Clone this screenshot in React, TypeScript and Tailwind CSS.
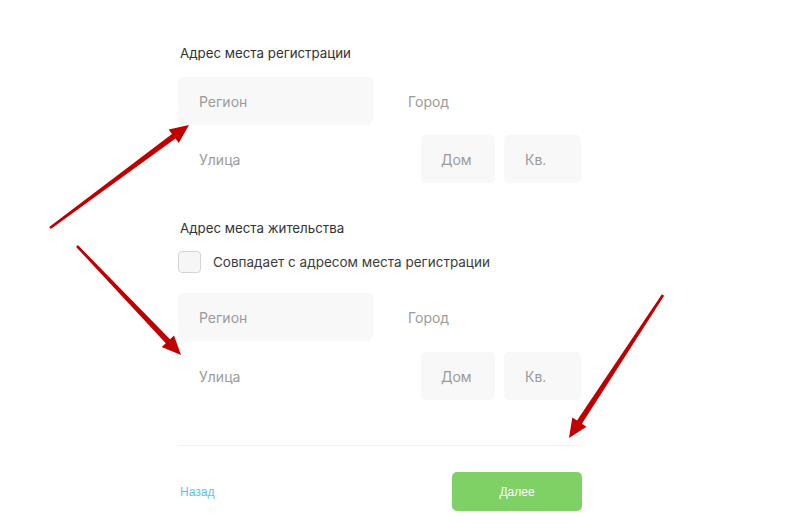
import React from "react";

type Pt = [number, number];

// tapered annotation arrow: thin tail, wide shaft near the head
function Arrow({ from, to }: { from: Pt; to: Pt }) {
  const [x1, y1] = from;
  const [x2, y2] = to;
  const dx = x2 - x1;
  const dy = y2 - y1;
  const len = Math.hypot(dx, dy);
  const ux = dx / len;
  const uy = dy / len;
  const nx = -uy;
  const ny = ux;
  const headLen = 19;
  const headW = 8.5;
  const bx = x2 - ux * headLen;
  const by = y2 - uy * headLen;
  const t0 = 1.3;
  const t1 = 2.9;
  const pts: Pt[] = [
    [x1 + nx * t0, y1 + ny * t0],
    [bx + nx * t1, by + ny * t1],
    [bx + nx * headW, by + ny * headW],
    [x2, y2],
    [bx - nx * headW, by - ny * headW],
    [bx - nx * t1, by - ny * t1],
    [x1 - nx * t0, y1 - ny * t0],
  ];
  return (
    <polygon
      points={pts.map((p) => `${p[0].toFixed(1)},${p[1].toFixed(1)}`).join(" ")}
      fill="#c00000"
    />
  );
}

function Field({ label, filled, className }: { label: string; filled?: boolean; className?: string }) {
  return (
    <div
      className={`h-[48px] rounded-[5px] flex items-center pl-[21px] text-[14px] text-[#9b9b9b] ${
        filled ? "bg-[#f8f8f8]" : "bg-white"
      } ${className ?? ""}`}
    >
      {label}
    </div>
  );
}

function AddressBlock({ rowGap }: { rowGap: string }) {
  return (
    <div className={`flex flex-col ${rowGap}`}>
      <div className="flex gap-[15px]">
        <Field label="Регион" filled className="w-[195px]" />
        <Field label="Город" className="w-[193px] !pl-[20px]" />
      </div>
      <div className="flex">
        <Field label="Улица" className="w-[243px]" />
        <Field label="Дом" filled className="w-[74px] !pl-[20px]" />
        <div className="w-[9px]" />
        <Field label="Кв." filled className="w-[77px]" />
      </div>
    </div>
  );
}

export default function App() {
  return (
    <div className="relative w-[800px] h-[531px] bg-white overflow-hidden" style={{ fontFamily: "Inter, 'Noto Sans', sans-serif" }}>
      <div className="ml-[178px] w-[403px] pt-[44px]">
        <div className="h-[18px] pl-[2px] text-[13.3px] leading-[18px] text-[#333]">Адрес места регистрации</div>
        <div className="mt-[15px]">
          <AddressBlock rowGap="gap-[10px]" />
        </div>

        <div className="mt-[36px] h-[18px] pl-[2px] text-[13.3px] leading-[18px] text-[#333]">Адрес места жительства</div>
        <label className="mt-[14px] flex items-center gap-[12px] h-[22px]">
          <span className="w-[23px] h-[22px] rounded-[4px] border border-[#d4d4d4] bg-[#f6f6f6]" />
          <span className="text-[13.5px] text-[#3c3c3c]">Совпадает с адресом места регистрации</span>
        </label>
        <div className="mt-[20px]">
          <AddressBlock rowGap="gap-[11px]" />
        </div>

        <div className="mt-[45px] h-px bg-[#f1f1f1]" />

        <div className="mt-[26px] flex items-center justify-between">
          <span className="pl-[2px] text-[12px] text-[#5ec3ee]" style={{ fontFamily: "'Liberation Sans', Arial, sans-serif" }}>
            Назад
          </span>
          <button
            className="w-[130px] h-[39px] -mr-[1px] rounded-[5px] bg-[#7fd166] text-white text-[12px]"
            style={{ fontFamily: "'Liberation Sans', Arial, sans-serif" }}
          >
            Далее
          </button>
        </div>
      </div>

      <svg className="absolute inset-0 pointer-events-none" width="800" height="531">
        <Arrow from={[50, 228]} to={[189, 125]} />
        <Arrow from={[77, 246]} to={[181, 355]} />
        <Arrow from={[663, 295]} to={[569, 438]} />
      </svg>
    </div>
  );
}
